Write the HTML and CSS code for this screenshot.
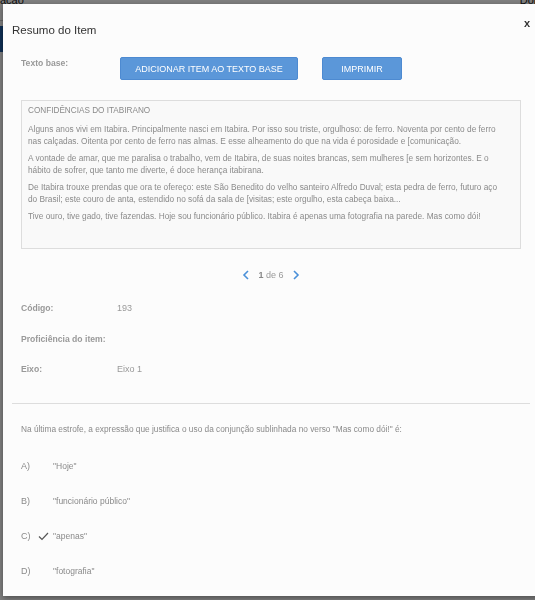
FILE: index.html
```html
<!DOCTYPE html>
<html lang="pt-BR">
<head>
    <meta charset="UTF-8">
    <meta name="viewport" content="width=device-width, initial-scale=1.0">
    <title>Resumo do Item</title>
    <link rel="stylesheet" href="styles.css">
</head>
<body>
    <!-- pagina por tras do modal -->
    <div class="page">
        <div class="page-top">
            <span class="page-title">Publicação</span>
            <span class="page-user">Dom</span>
        </div>
        <div class="page-bar"></div>
    </div>

    <div class="backdrop"></div>

    <div class="modal">
        <div class="modal-header">
            <h2>Resumo do Item</h2>
            <span class="close">x</span>
        </div>

        <div class="modal-body">
            <div class="row-base">
                <span class="label">Texto base:</span>
                <button class="btn btn-add">ADICIONAR ITEM AO TEXTO BASE</button>
                <button class="btn btn-print">IMPRIMIR</button>
            </div>

            <div class="texto-base">
                <p class="texto-titulo">CONFIDÊNCIAS DO ITABIRANO</p>
                <p>Alguns anos vivi em Itabira. Principalmente nasci em Itabira. Por isso sou triste, orgulhoso: de ferro. Noventa por cento de ferro nas calçadas. Oitenta por cento de ferro nas almas. E esse alheamento do que na vida é porosidade e [comunicação.</p>
                <p>A vontade de amar, que me paralisa o trabalho, vem de Itabira, de suas noites brancas, sem mulheres [e sem horizontes. E o hábito de sofrer, que tanto me diverte, é doce herança itabirana.</p>
                <p>De Itabira trouxe prendas que ora te ofereço: este São Benedito do velho santeiro Alfredo Duval; esta pedra de ferro, futuro aço do Brasil; este couro de anta, estendido no sofá da sala de [visitas; este orgulho, esta cabeça baixa...</p>
                <p>Tive ouro, tive gado, tive fazendas. Hoje sou funcionário público. Itabira é apenas uma fotografia na parede. Mas como dói!</p>
            </div>

            <div class="paginacao">
                <svg width="8" height="10" viewBox="0 0 8 10"><path d="M6 1 L2 5 L6 9" fill="none" stroke="#4a90d9" stroke-width="1.6"/></svg>
                <span><b>1</b> de 6</span>
                <svg width="8" height="10" viewBox="0 0 8 10"><path d="M2 1 L6 5 L2 9" fill="none" stroke="#4a90d9" stroke-width="1.6"/></svg>
            </div>

            <div class="info">
                <div class="info-row"><span class="label">Código:</span><span class="valor">193</span></div>
                <div class="info-row"><span class="label">Proficiência do item:</span><span class="valor"></span></div>
                <div class="info-row"><span class="label">Eixo:</span><span class="valor">Eixo 1</span></div>
            </div>
        </div>

        <hr class="divisor">

        <div class="modal-body">
            <p class="enunciado">Na última estrofe, a expressão que justifica o uso da conjunção sublinhada no verso "Mas como dói!" é:</p>
            <ul class="alternativas">
                <li><span class="letra">A)</span><span class="marca"></span><span>"Hoje"</span></li>
                <li><span class="letra">B)</span><span class="marca"></span><span>"funcionário público"</span></li>
                <li><span class="letra">C)</span><span class="marca"><svg width="11" height="9" viewBox="0 0 11 9"><path d="M1 4.5 L4 7.5 L10 1" fill="none" stroke="#555" stroke-width="1.2"/></svg></span><span>"apenas"</span></li>
                <li><span class="letra">D)</span><span class="marca"></span><span>"fotografia"</span></li>
            </ul>
        </div>
    </div>
</body>
</html>
```

FILE: styles.css
```css
html, body {
    margin: 0;
    padding: 0;
    height: 100%;
    overflow: hidden;
    font-family: "Liberation Sans", Arial, sans-serif;
}

.page {
    background: #fff;
    height: 100%;
}

.page-top {
    display: flex;
    justify-content: space-between;
    height: 20px;
    font-size: 11px;
    color: #222;
    border-bottom: 1px solid #ccc;
}

.page-title {
    margin-left: -30px;
    margin-top: -6px;
}

.page-user {
    margin-right: -8px;
    margin-top: -6px;
}

.page-bar {
    background: #1f5fa8;
    width: 20px;
    height: 26px;
    margin-top: 5px;
}

.backdrop {
    position: fixed;
    inset: 0;
    background: rgba(0, 0, 0, 0.5);
}

.modal {
    position: fixed;
    left: 3px;
    top: 4px;
    width: 560px;
    height: 592px;
    background: #fcfcfc;
    box-shadow: 0 2px 6px rgba(0, 0, 0, 0.4);
    color: #999;
}

.modal-header {
    display: flex;
    justify-content: space-between;
    align-items: center;
    padding: 20px 0 0 9px;
}

.modal-header h2 {
    margin: 0;
    font-size: 11.5px;
    font-weight: normal;
    color: #333;
}

.close {
    margin-right: 33px;
    margin-top: -15px;
    font-size: 11px;
    font-weight: bold;
    color: #333;
}

.modal-body {
    padding: 0 18px;
    width: 500px;
}

.label {
    font-size: 8.6px;
    font-weight: bold;
    color: #999;
}

.row-base {
    display: flex;
    align-items: flex-start;
    margin-top: 21px;
}

.row-base .label {
    width: 99px;
    margin-top: 1px;
}

.btn {
    height: 23px;
    border: 1px solid #4d8ad1;
    border-radius: 2px;
    background: #5b97d9;
    color: #fff;
    font-family: "Liberation Sans", Arial, sans-serif;
    font-size: 9px;
    padding: 0;
    cursor: pointer;
}

.btn-add {
    width: 178px;
    margin-top: 0;
}

.btn-print {
    width: 80px;
    margin-left: 24px;
    margin-top: 0;
}

.texto-base {
    margin-top: 20px;
    height: 134px;
    border: 1px solid #ddd;
    background: #f9f9f9;
    padding: 4px 20px 9px 6px;
    font-size: 8.3px;
    line-height: 12px;
    color: #8a8a8a;
}

.texto-base p {
    margin: 0 0 5px;
}

.texto-base .texto-titulo {
    font-size: 8.2px;
    margin-bottom: 6px;
}

.paginacao {
    display: flex;
    justify-content: center;
    align-items: center;
    gap: 8px;
    margin-top: 21px;
    font-size: 9px;
    color: #999;
}

.paginacao b {
    color: #888;
}

.info {
    margin-top: 23px;
}

.info-row {
    display: flex;
    height: 30.5px;
}

.info-row .label {
    width: 96px;
}

.valor {
    font-size: 9px;
    color: #999;
}

.divisor {
    border: none;
    border-top: 1px solid #ddd;
    margin: 8px 0 0 9px;
    width: 518px;
}

.enunciado {
    margin: 20px 0 0;
    font-size: 8.3px;
    color: #8a8a8a;
}

.alternativas {
    list-style: none;
    margin: 15px 0 0;
    padding: 0;
}

.alternativas li {
    display: flex;
    align-items: center;
    height: 35px;
    font-size: 8.5px;
    color: #8a8a8a;
}

.letra {
    width: 13px;
    font-size: 9px;
}

.marca {
    width: 19px;
    display: flex;
    justify-content: center;
}
```
